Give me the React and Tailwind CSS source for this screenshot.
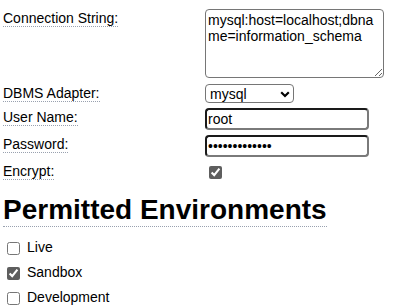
export default function App() {
  const labelCls =
    "inline-block border-b border-dotted border-gray-400 leading-[16px]";

  return (
    <div className="min-h-screen bg-white pl-[3px] text-[14px] leading-[16px] text-black font-['Liberation_Sans',Arial,sans-serif]">
      {/* Connection settings */}
      <div className="grid grid-cols-[202px_1fr] items-start pt-[9px]">
        <div className="flex items-start pt-[1px]">
          <span className={labelCls}>Connection String:</span>
        </div>
        <div className="flex">
          <textarea
            defaultValue="mysql:host=localhost;dbname=information_schema"
            className="block w-[179px] h-[69px] rounded-[4px] border border-[#767676] px-[2px] py-[2px] leading-[16px]"
          />
        </div>

        <div className="flex items-start mt-[6px] pt-[1px]">
          <span className={labelCls}>DBMS Adapter:</span>
        </div>
        <div className="flex mt-[6px]">
          <div className="relative">
            <select
              defaultValue="mysql"
              className="block appearance-none w-[89px] h-[19px] rounded-[4px] border border-[#767676] pl-[4px] leading-[16px]"
            >
              <option value="mysql">mysql</option>
              <option value="pgsql">pgsql</option>
              <option value="sqlite">sqlite</option>
            </select>
            <svg
              className="pointer-events-none absolute left-[75px] top-[7px]"
              width="10"
              height="7"
              viewBox="0 0 10 7"
            >
              <path d="M1.2 1.3 L5 5 L8.8 1.3" fill="none" stroke="#000" strokeWidth="2.2" />
            </svg>
          </div>
        </div>

        <div className="flex items-start mt-[5px] pt-[1px]">
          <span className={labelCls}>User Name:</span>
        </div>
        <div className="flex mt-[5px]">
          <input
            type="text"
            defaultValue="root"
            className="block w-[164px] h-[22px] rounded-[4px] border-2 border-t-[#1a1a1a] border-l-[#1a1a1a] border-r-[#7a7a7a] border-b-[#7a7a7a] px-[1px]"
          />
        </div>

        <div className="flex items-start mt-[5px] pt-[1px]">
          <span className={labelCls}>Password:</span>
        </div>
        <div className="flex mt-[5px]">
          <input
            type="password"
            defaultValue="secretpasswrd"
            className="block w-[164px] h-[22px] rounded-[4px] border-2 border-t-[#1a1a1a] border-l-[#1a1a1a] border-r-[#7a7a7a] border-b-[#7a7a7a] px-[1px]"
          />
        </div>

        <div className="flex items-start mt-[6px]">
          <span className={labelCls}>Encrypt:</span>
        </div>
        <div className="flex mt-[6px]">
          <input
            type="checkbox"
            defaultChecked
            className="block mt-[3px] mb-[3px] ml-[4px] w-[13px] h-[13px] accent-[#5e5e5e]"
          />
        </div>
      </div>

      {/* Environments */}
      <div className="flex items-start mt-[12px]">
        <h2 className="inline-block border-b border-dotted border-gray-400 text-[28px] font-bold leading-[32px]">
          Permitted Environments
        </h2>
      </div>

      <div className="mt-[12px]">
        {[
          ["Live", false],
          ["Sandbox", true],
          ["Development", false],
        ].map(([name, on]) => (
          <div key={name} className="flex items-start h-[25px]">
            <input
              type="checkbox"
              defaultChecked={on}
              className="mt-[3px] ml-[4px] mr-[7px] w-[13px] h-[13px] accent-[#5e5e5e]"
            />
            <label className="leading-[16px]">{name}</label>
          </div>
        ))}
      </div>
    </div>
  );
}
